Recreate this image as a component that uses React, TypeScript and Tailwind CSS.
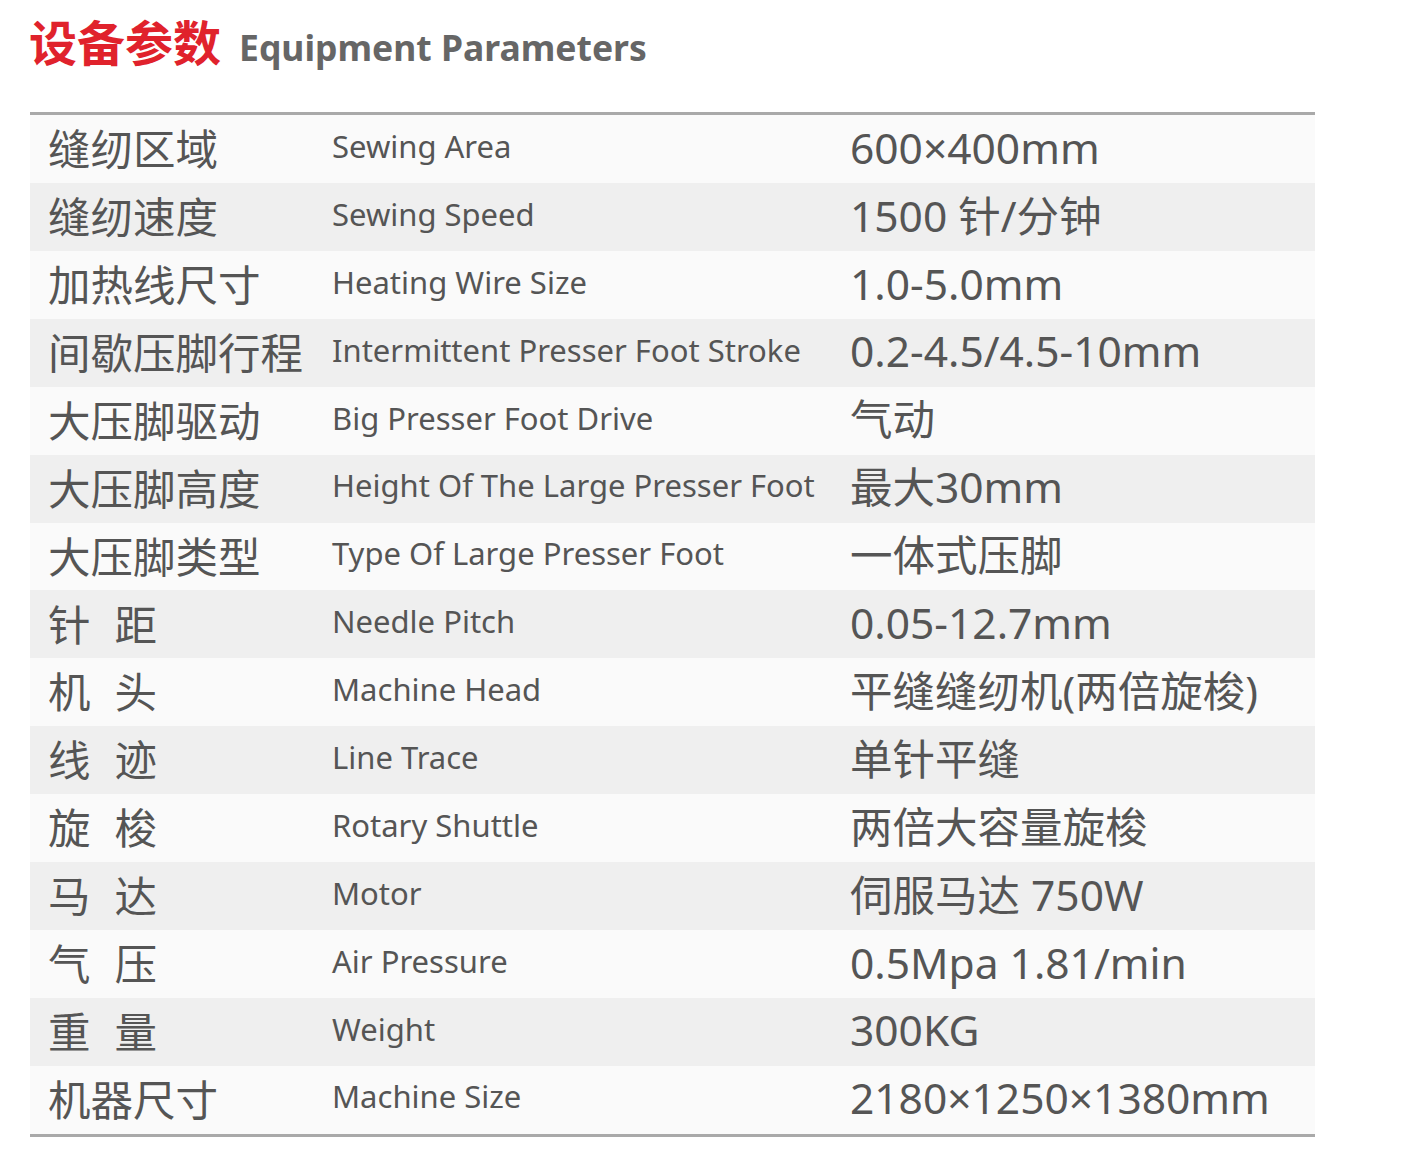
const rows: [string, string, string][] = [
  ['缝纫区域', 'Sewing Area', '600×400mm'],
  ['缝纫速度', 'Sewing Speed', '1500 针/分钟'],
  ['加热线尺寸', 'Heating Wire Size', '1.0-5.0mm'],
  ['间歇压脚行程', 'Intermittent Presser Foot Stroke', '0.2-4.5/4.5-10mm'],
  ['大压脚驱动', 'Big Presser Foot Drive', '气动'],
  ['大压脚高度', 'Height Of The Large Presser Foot', '最大30mm'],
  ['大压脚类型', 'Type Of Large Presser Foot', '一体式压脚'],
  ['针 距', 'Needle Pitch', '0.05-12.7mm'],
  ['机 头', 'Machine Head', '平缝缝纫机(两倍旋梭)'],
  ['线 迹', 'Line Trace', '单针平缝'],
  ['旋 梭', 'Rotary Shuttle', '两倍大容量旋梭'],
  ['马 达', 'Motor', '伺服马达 750W'],
  ['气 压', 'Air Pressure', '0.5Mpa 1.81/min'],
  ['重 量', 'Weight', '300KG'],
  ['机器尺寸', 'Machine Size', '2180×1250×1380mm'],
];

export default function App() {
  return (
    <div className="min-h-screen bg-white pl-[29px] pt-[10px] font-['Noto_Sans','Noto_Sans_CJK_SC',sans-serif] text-[#555]">
      <div className="flex items-baseline gap-[18px]">
        <h1 className="text-[48px] font-bold leading-[60px] text-[#e0222c] font-['Noto_Sans_CJK_SC',sans-serif]">
          设备参数
        </h1>
        <h2 className="text-[35.5px] font-bold text-[#666] font-['Noto_Sans',sans-serif]">Equipment Parameters</h2>
      </div>

      <div className="ml-[1px] mt-[38px] w-[1285px] border-t-[3px] border-b-[3px] border-[#a9a9a9]">
        {rows.map(([zh, en, val], i) => (
          <div
            key={zh}
            className={`flex h-[67.9px] items-center ${i % 2 === 0 ? 'bg-[#fafafa]' : 'bg-[#efefef]'}`}
          >
            <div className="flex w-[300px] gap-[24px] pb-[4px] pl-[18px] text-[42.5px] font-['Noto_Sans_CJK_SC',sans-serif] whitespace-nowrap">
              {zh.split(' ').map((part) => (
                <span key={part}>{part}</span>
              ))}
            </div>
            <div className="w-[518px] pb-[6px] pl-[2px] text-[31px] whitespace-nowrap">{en}</div>
            <div className="flex-1 pb-[3px] pl-[2px] text-[42.5px] font-['Noto_Sans','Noto_Sans_CJK_SC',sans-serif] whitespace-nowrap">
              {val}
            </div>
          </div>
        ))}
      </div>
    </div>
  );
}
